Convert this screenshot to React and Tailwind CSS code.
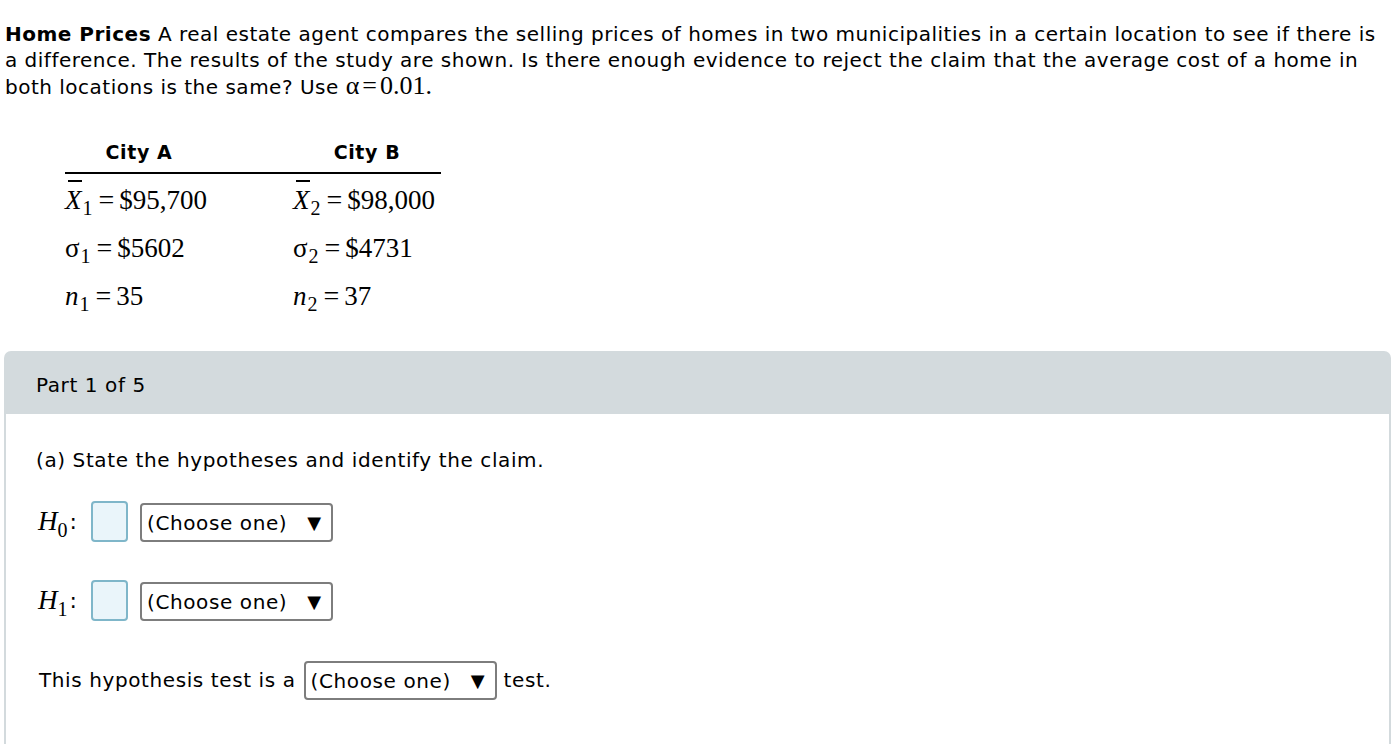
import React from 'react'

const sans = { fontFamily: '"DejaVu Sans", Verdana, sans-serif' }

const Math = ({ children, className = '' }) => (
  <span className={`font-['Liberation_Serif',serif] tracking-normal ${className}`}>{children}</span>
)

const Select = () => (
  <div className="h-[39px] w-[193px] mt-[2px] border-2 border-[#7d7d7d] rounded-[4px] bg-white flex items-center justify-between pl-[5px] pr-[10px] text-[20px] text-black">
    <span>(Choose one)</span>
    <span className="text-[18px] tracking-normal">▼</span>
  </div>
)

const Box = () => (
  <div className="w-[37px] h-[41px] border-2 border-[#7fb6c9] rounded-[4px] bg-[#eaf5fa]" />
)

const Cell = ({ v, sub, val, bar, italic }) => (
  <div className="h-[48px] flex items-center text-[27px] text-black leading-none">
    <Math>
      <span className={`relative ${italic ? 'italic' : ''}`}>
        {bar && <span className="absolute left-[3px] right-[0px] top-[-5px] h-[1.5px] bg-black" />}
        {v}
      </span>
      <sub className="text-[20px] relative top-[6px] align-baseline ml-[1px]">{sub}</sub>
      <span className="text-[28px] ml-[6px] mr-[5px]">=</span>
      {val}
    </Math>
  </div>
)

const HLabel = ({ sub }) => (
  <div className="w-[43px] pl-[2px] flex items-center text-[27px]">
    <Math className="italic">H</Math>
    <Math className="text-[20px] relative top-[8px]">{sub}</Math>
    <span className="text-[22px] ml-[2px]">:</span>
  </div>
)

const App = () => {
  return (
    <div className="w-[1392px] h-[744px] bg-white overflow-hidden text-black tracking-[0.6px]" style={sans}>
      <div className="pl-[5px] pr-[4px] pt-[21px] text-[20px] leading-[26px] tracking-[0.5px]">
        <p>
          <b>Home Prices</b> A real estate agent compares the selling prices of homes in two municipalities in a certain location to see if there is a difference. The results of the study are shown. Is there enough evidence to reject the claim that the average cost of a home in both locations is the same? Use{' '}
          <Math className="text-[26px]">α<span className="mx-[3px]">=</span>0.01.</Math>
        </p>
      </div>

      {/* table */}
      <div className="ml-[65px] mt-[33px] w-[376px]">
        <div className="flex border-b-2 border-black h-[41px] items-center text-[19px] font-bold">
          <div className="w-[228px] pr-[80px] text-center">City A</div>
          <div className="flex-1 text-center">City B</div>
        </div>
        <div className="flex pt-[2px]">
          <div className="w-[228px]">
            <Cell v="X" sub="1" val="$95,700" bar italic />
            <Cell v="σ" sub="1" val="$5602" />
            <Cell v="n" sub="1" val="35" italic />
          </div>
          <div className="flex-1">
            <Cell v="X" sub="2" val="$98,000" bar italic />
            <Cell v="σ" sub="2" val="$4731" />
            <Cell v="n" sub="2" val="37" italic />
          </div>
        </div>
      </div>

      {/* part panel */}
      <div className="ml-[4px] mr-[1px] mt-[31px] rounded-t-[7px] bg-[#d3dadd] px-[2px]">
        <div className="h-[63px] flex items-center pl-[30px] pt-[5px] text-[20px]">Part 1 of 5</div>
        <div className="bg-white h-[340px] pl-[30px] pt-[33px] text-[20px]">
          <div className="h-[26px] leading-[26px]">(a) State the hypotheses and identify the claim.</div>
          <div className="mt-[28px] flex items-center gap-[12px]">
            <HLabel sub="0" />
            <Box />
            <Select />
          </div>
          <div className="mt-[38px] flex items-center gap-[12px]">
            <HLabel sub="1" />
            <Box />
            <Select />
          </div>
          <div className="mt-[38px] flex items-center pl-[3px]">
            <span>This hypothesis test is a</span>
            <div className="ml-[8px]"><Select /></div>
            <span className="ml-[7px]">test.</span>
          </div>
        </div>
      </div>
    </div>
  )
}

export default App
